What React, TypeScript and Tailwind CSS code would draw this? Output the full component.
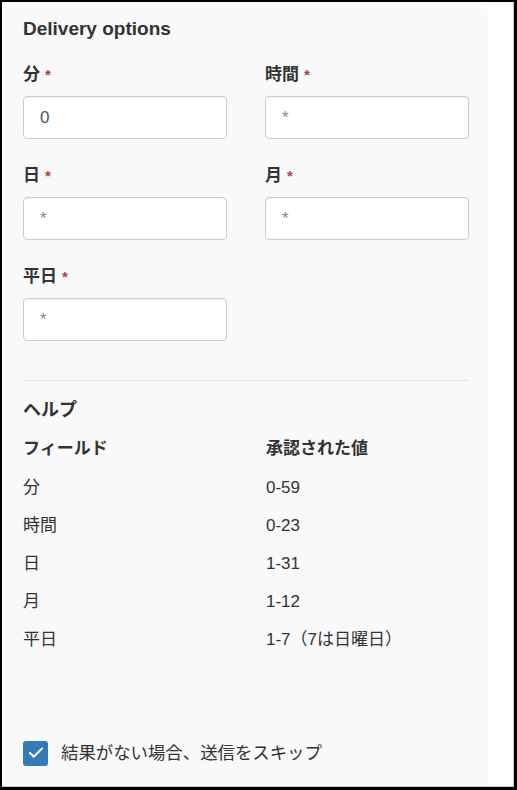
import { Check } from "lucide-react";

const fields = [
  { label: "分", value: "0" },
  { label: "時間", value: "" },
  { label: "日", value: "" },
  { label: "月", value: "" },
  { label: "平日", value: "" },
];

const helpRows = [
  ["分", "0-59"],
  ["時間", "0-23"],
  ["日", "1-31"],
  ["月", "1-12"],
  ["平日", "1-7（7は日曜日）"],
];

export default function App() {
  return (
    <div
      className="h-[790px] w-[517px] border-l-2 border-t-2 border-r-[3px] border-b-[3px] border-black bg-white text-[#333]"
      style={{ fontFamily: '"Liberation Sans", "Noto Sans CJK JP", sans-serif' }}
    >
      <div className="flex h-full flex-col border-r border-b border-[#c8c8c8] pt-[5px] pl-px">
        <div className="flex w-[485px] flex-1 flex-col rounded-tr-md bg-[#f9f9f9] pl-5 pt-[10px]">
          {/* Delivery options */}
          <h2 className="text-[19px] font-bold leading-6">Delivery options</h2>

          <div className="mt-[22px] grid grid-cols-[204px_204px] gap-x-[38px] gap-y-[25px]">
            {fields.map((f) => (
              <div key={f.label}>
                <label className="flex h-6 items-center text-[17px] font-bold leading-6">
                  {f.label}
                  <span className="ml-[5px] text-[15px] font-bold text-[#a94442]">*</span>
                </label>
                <input
                  readOnly
                  value={f.value}
                  placeholder="*"
                  className="mt-[9px] block h-[43px] w-[204px] rounded-[4px] border border-[#ccc] bg-white px-[16px] text-[17px] text-[#555] shadow-[inset_0_1px_1px_rgba(0,0,0,0.06)] outline-none placeholder:text-[#888]"
                />
              </div>
            ))}
          </div>

          <div className="mt-[39px] w-[446px] border-t border-[#e6e6e6]" />

          {/* Help */}
          <h3 className="mt-[17px] text-[18px] font-semibold leading-6">ヘルプ</h3>
          <div className="mt-[7px] w-[446px]">
            <div className="grid h-[40px] grid-cols-[243px_1fr] items-center text-[17px] font-bold">
              <span>フィールド</span>
              <span>承認された値</span>
            </div>
            {helpRows.map(([k, v]) => (
              <div key={k} className="grid h-[38px] grid-cols-[243px_1fr] items-center text-[17px]">
                <span>{k}</span>
                <span>{v}</span>
              </div>
            ))}
          </div>

          <label className="mt-[81px] flex items-center gap-[13px] text-[17.4px]">
            <span className="flex h-[25px] w-[25px] items-center justify-center rounded-[3px] bg-[#337ab7]">
              <Check size={18} strokeWidth={2.5} className="text-white" />
            </span>
            結果がない場合、送信をスキップ
          </label>
        </div>
      </div>
    </div>
  );
}
